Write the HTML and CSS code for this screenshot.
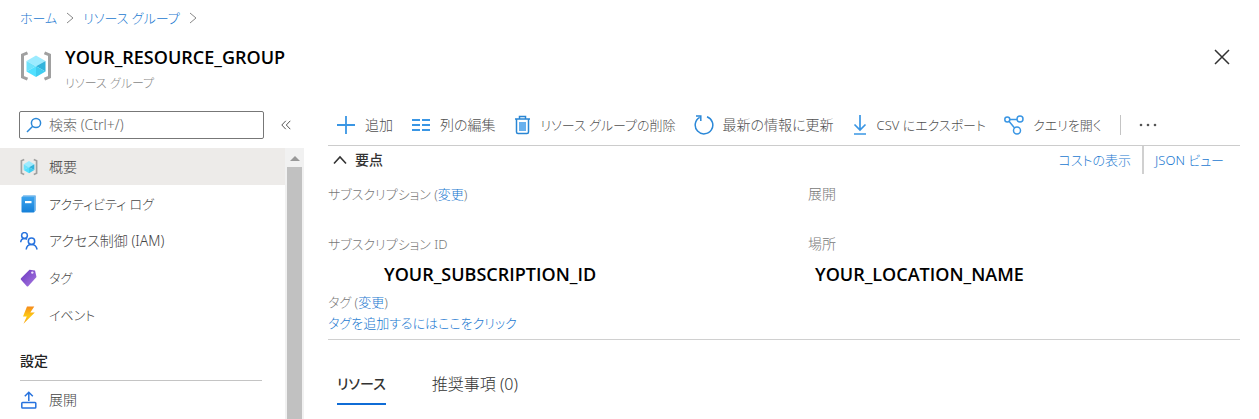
FILE: index.html
```html
<!DOCTYPE html>
<html lang="ja">
<head>
<meta charset="utf-8">
<meta name="viewport" content="width=device-width, initial-scale=1">
<title>リソース グループ</title>
<link rel="stylesheet" href="styles.css">
</head>
<body>
<svg class="defs" width="0" height="0" aria-hidden="true">
  <defs>
    <linearGradient id="book" x1="0" y1="0" x2="0" y2="1"><stop offset="0" stop-color="#3ba4ee"/><stop offset="1" stop-color="#1680d8"/></linearGradient>
    <linearGradient id="tag" x1="0" y1="0" x2="1" y2="1"><stop offset="0" stop-color="#6a35c0"/><stop offset="1" stop-color="#a87ae0"/></linearGradient>
    <linearGradient id="bolt" x1="0" y1="0" x2="0" y2="1"><stop offset="0" stop-color="#f58a1c"/><stop offset="0.55" stop-color="#fdc913"/><stop offset="1" stop-color="#f9a51a"/></linearGradient>
    <symbol id="group" viewBox="0 0 32 32">
      <path d="M7.500 2.800 2.500 5v22l5 2.200M24.500 2.800l5 2.200v22l-5 2.200" fill="none" stroke="#a0a0a0" stroke-width="3"/>
      <path d="M16 5.500 25.500 11 16 16.300 6.500 11z" fill="#9cebff"/>
      <path d="M6.500 11 16 16.300 6.500 21.500z" fill="#6fe2fb"/>
      <path d="M25.500 11 16 16.300l9.500 5.200z" fill="#32b4dc"/>
      <path d="M6.500 21.500 16 16.300V27z" fill="#50e0ff"/>
      <path d="M25.500 21.500 16 16.300V27z" fill="#3fcdf0"/>
    </symbol>
  </defs>
</svg>

<header class="header">
  <nav class="crumbs" aria-label="階層">
    <a href="#">ホーム</a>
    <svg width="8" height="14" viewBox="0 0 8 14" aria-hidden="true"><path d="M1 2l6 5-6 5"/></svg>
    <a href="#">リソース グループ</a>
    <svg width="8" height="14" viewBox="0 0 8 14" aria-hidden="true"><path d="M1 2l6 5-6 5"/></svg>
  </nav>
  <div class="titlebar">
    <svg class="title-icon" width="32" height="32" aria-hidden="true"><use href="#group"/></svg>
    <div class="titles">
      <h1 class="title">YOUR_RESOURCE_GROUP</h1>
      <p class="subtitle">リソース グループ</p>
    </div>
    <button class="close" type="button" aria-label="閉じる">
      <svg width="16" height="16" viewBox="0 0 16 16"><path d="M1 1l14 14M15 1 1 15"/></svg>
    </button>
  </div>
</header>

<div class="body">
  <aside class="sidebar">
    <div class="search-row">
      <label class="search">
        <svg width="16" height="16" viewBox="0 0 16 16" aria-hidden="true"><circle cx="10" cy="6" r="4.600"/><path d="M6.700 9.300 1 15"/></svg>
        <input type="text" placeholder="検索 (Ctrl+/)" aria-label="検索">
      </label>
      <button class="collapse" type="button" aria-label="折りたたむ">
        <svg width="10" height="10" viewBox="0 0 10 10"><path d="M4.800.800.800 5l4 4.200M9.300.800l-4 4.200 4 4.200"/></svg>
      </button>
    </div>
    <div class="menu-area">
      <nav class="menu" aria-label="メニュー">
        <a class="item current" href="#"><svg width="18" height="18"><use href="#group"/></svg>概要</a>
        <a class="item kana" href="#">
          <svg width="18" height="18" viewBox="0 0 18 18"><path d="M3 .500h12.500V15l-1 2H3z" fill="#8cc5f2"/><rect x="1.500" y="1.500" width="13" height="16" rx="1" fill="url(#book)"/><path d="M2 1.500 3.500.500h12l.300.500v14.500l-1.300 1.500V1.800z" fill="#6db3ea"/><rect x="5" y="6" width="6.500" height="2.200" fill="#fff"/></svg>アクティビティ ログ</a>
        <a class="item" href="#">
          <svg class="stroke-blue" width="18" height="18" viewBox="0 0 18 18"><circle cx="4.500" cy="3.500" r="2.900"/><path d="M.700 10.300C.900 8 2.300 6.500 4.500 6.500c1 0 1.900.300 2.500.900"/><circle cx="11.500" cy="9.300" r="3.200"/><path d="M6.200 17.500c.300-3 2.400-5 5.300-5s5 2 5.600 5"/></svg>アクセス制御 (IAM)</a>
        <a class="item kana" href="#">
          <svg width="18" height="18" viewBox="0 0 18 18"><path d="M9.500.800 15 1.500l1.500 6.500-8.300 9.200q-.700.600-1.400 0L1 10.700q-.600-.700 0-1.400z" fill="url(#tag)"/><circle cx="12.300" cy="3.600" r="1.200" fill="#eee2fb"/></svg>タグ</a>
        <a class="item kana" href="#">
          <svg width="18" height="18" viewBox="0 0 18 18"><path d="M7 .500h7.300l-4 6h4.500L3.500 17.700l3.300-7.200H3z" fill="url(#bolt)"/></svg>イベント</a>
        <h2 class="menu-heading">設定</h2>
        <a class="item" href="#">
          <svg class="stroke-blue" width="18" height="18" viewBox="0 0 18 18"><rect x="1.800" y="11.500" width="14" height="5.500" rx=".800"/><path d="M8.800 10V1.300M4.800 5.300l4-4 4 4"/></svg>展開</a>
      </nav>
      <div class="scrollbar" aria-hidden="true">
        <span class="arrow"></span>
        <span class="thumb"></span>
      </div>
    </div>
  </aside>

  <main class="main">
    <div class="toolbar">
      <button type="button"><svg width="20" height="20" viewBox="0 0 20 20"><path d="M10 1v18M1 10h18" stroke-width="1.800"/></svg>追加</button>
      <button type="button"><svg width="20" height="20" viewBox="0 0 20 20"><path d="M1 5h8M1 10h8M1 15h8M11 5h8M11 10h8M11 15h8" stroke-width="1.800"/></svg>列の編集</button>
      <button class="kana" type="button"><svg width="18" height="20" viewBox="0 0 18 20"><path d="M1 4h15M5.500 4V1.500h6V4M2.500 4v13q0 1.500 1.500 1.500h9q1.500 0 1.500-1.500V4" stroke="#2a86d4"/><rect x="5" y="7" width="7" height="9" fill="#69b1ee" stroke="none"/></svg>リソース グループの削除</button>
      <button type="button"><svg width="20" height="20" viewBox="0 0 20 20"><path d="M13 1.800a8.800 8.800 0 1 1-7.300.600M2 1h4.800v5" stroke="#2b88d8"/></svg>最新の情報に更新</button>
      <button class="kana" type="button"><svg width="16" height="20" viewBox="0 0 16 20"><path d="M8 0v15M2.500 9.500 8 15l5.500-5.500M2 19h12" stroke-width="1.700"/></svg>CSV にエクスポート</button>
      <button class="kana" type="button"><svg width="20" height="20" viewBox="0 0 20 20"><circle cx="3.300" cy="4.500" r="2.500"/><circle cx="16" cy="4" r="3"/><circle cx="13" cy="15.500" r="3.500"/><path d="M5.800 4.400H13M5 6.300l5.600 6.600"/></svg>クエリを開く</button>
      <span class="divider"></span>
      <button class="more" type="button" aria-label="その他"><svg width="18" height="4" viewBox="0 0 18 4"><circle cx="2" cy="2" r="1.300"/><circle cx="9" cy="2" r="1.300"/><circle cx="16" cy="2" r="1.300"/></svg></button>
    </div>

    <section class="essentials">
      <div class="essentials-head">
        <button class="toggle" type="button" aria-expanded="true"><svg width="14" height="10" viewBox="0 0 14 10"><path d="M1 8.500l6-6.500 6 6.500"/></svg>要点</button>
        <div class="views kana"><a href="#">コストの表示</a><a href="#">JSON ビュー</a></div>
      </div>
      <dl class="facts">
        <div class="fact">
          <dt class="kana">サブスクリプション (<a href="#">変更</a>)</dt>
        </div>
        <div class="fact">
          <dt>展開</dt>
        </div>
        <div class="fact">
          <dt class="kana">サブスクリプション ID</dt>
          <dd class="indented">YOUR_SUBSCRIPTION_ID</dd>
        </div>
        <div class="fact">
          <dt>場所</dt>
          <dd>YOUR_LOCATION_NAME</dd>
        </div>
      </dl>
      <div class="tags kana">
        <span>タグ (<a href="#">変更</a>)</span>
        <a href="#">タグを追加するにはここをクリック</a>
      </div>
    </section>

    <div class="tabs" role="tablist">
      <button class="tab selected" type="button" role="tab" aria-selected="true">リソース</button>
      <button class="tab" type="button" role="tab" aria-selected="false">推奨事項 (0)</button>
    </div>
  </main>
</div>
</body>
</html>
```

FILE: styles.css
```css
* { box-sizing: border-box; }

body {
  display: flex;
  flex-direction: column;
  min-height: 100vh;
  margin: 0;
  background: #fff;
  color: #505050;
  font-family: "Noto Sans", "Noto Sans CJK JP", sans-serif;
  font-size: 14px;
  font-weight: 300;
  line-height: 20px;
  font-feature-settings: "palt";
}

h1, h2, p, dl, dd { margin: 0; }
a { color: #1a78d0; text-decoration: none; }
svg { flex: none; }
button {
  padding: 0;
  border: 0;
  background: none;
  color: inherit;
  font: inherit;
  font-feature-settings: inherit;
  cursor: pointer;
}
.defs { position: absolute; }
.kana { font-size: 13px; }

.header { padding: 8px 28px 0 20px; }
.crumbs { display: flex; align-items: center; gap: 9px; font-size: 13px; }
.crumbs svg { fill: none; stroke: #888; }

.titlebar { display: flex; align-items: flex-start; gap: 13px; padding-top: 17px; }
.title-icon { margin-top: 5px; }
.titles { flex: 1; }
.title { color: #000; font-family: "Open Sans", sans-serif; font-size: 18px; font-weight: 600; line-height: 24px; }
.subtitle { padding-top: 5px; color: #888; font-size: 12px; }
.close { display: flex; padding: 4px 0; margin-right: 1px; }
.close svg { fill: none; stroke: #333; stroke-width: 1.5; }

.body { display: flex; flex: 1; gap: 24px; padding-top: 11px; }

.sidebar { display: flex; flex: none; flex-direction: column; width: 304px; }
.search-row { display: flex; align-items: center; gap: 17px; padding: 6px 0 9px 19px; }
.search {
  display: flex;
  align-items: center;
  gap: 7px;
  width: 245px;
  height: 28px;
  padding: 0 6px;
  border: 1px solid #777;
  border-radius: 2px;
}
.search svg { fill: none; stroke: #2b88d8; stroke-width: 1.5; }
.search input {
  flex: 1;
  min-width: 0;
  padding: 0;
  border: 0;
  outline: 0;
  background: none;
  font: inherit;
}
.search input::placeholder { color: #666; opacity: 1; }
.collapse { display: flex; }
.collapse svg { fill: none; stroke: #555; }

.menu-area { display: flex; flex: 1; }
.menu { flex: 1; }
.item {
  display: flex;
  align-items: center;
  gap: 11px;
  height: 37px;
  padding-left: 20px;
  color: #444;
}
.current { background: #edebe9; }
.stroke-blue { fill: none; stroke: #2672de; stroke-width: 1.5; }
.menu-heading {
  margin: 0 23px 0 20px;
  padding: 18px 0 9px;
  border-bottom: 1px solid #c4c4c4;
  color: #222;
  font-size: 14px;
  font-weight: 500;
}
.scrollbar {
  display: flex;
  flex-direction: column;
  align-items: center;
  width: 19px;
  background: #f1f1f1;
}
.arrow {
  margin: 8px 0 6px;
  border: 5px solid transparent;
  border-top: 0;
  border-bottom-color: #999;
}
.thumb { flex: 1; width: 15px; background: #c1c1c1; }

.main { flex: 1; min-width: 0; padding-right: 19px; }
.toolbar {
  display: flex;
  align-items: center;
  gap: 18px;
  height: 41px;
  padding-left: 8px;
  border-bottom: 1px solid #ccc;
  white-space: nowrap;
}
.toolbar button { display: flex; align-items: center; gap: 9px; }
.toolbar svg { fill: none; stroke: #3a96e4; stroke-width: 1.5; }
.toolbar .more svg { fill: #555; stroke: none; }
.divider { width: 1px; height: 20px; background: #c4c4c4; }

.essentials { border-bottom: 1px solid #d0d0d0; }
.essentials-head { display: flex; justify-content: space-between; height: 28px; }
.toggle {
  display: flex;
  align-items: center;
  gap: 8px;
  padding-left: 5px;
  color: #333;
  font-weight: 500;
}
.toggle svg { fill: none; stroke: #333; stroke-width: 1.6; }
.views { display: flex; line-height: 28px; }
.views a { padding: 0 16px 0 11px; }
.views a + a { border-left: 2px solid #d0d0d0; }
.views a:first-child { padding-right: 11px; }

.facts { display: grid; grid-template-columns: 480px 1fr; row-gap: 30px; padding-top: 10px; }
.fact dt { color: #777; }
.fact dd { padding: 8px 0 0 7px; color: #000; font-family: "Open Sans", sans-serif; font-size: 18px; font-weight: 600; line-height: 24px; }
.fact .indented { padding-left: 56px; }

.tags { display: flex; flex-direction: column; padding: 6px 0 5px; color: #777; line-height: 21px; }

.tabs { display: flex; gap: 46px; padding: 31px 0 0 9px; }
.tab { padding-bottom: 6px; border-bottom: 2px solid transparent; font-size: 16px; line-height: 26px; color: #333; }
.selected { border-color: #0f6cd6; font-size: 14px; font-weight: 500; }
```
